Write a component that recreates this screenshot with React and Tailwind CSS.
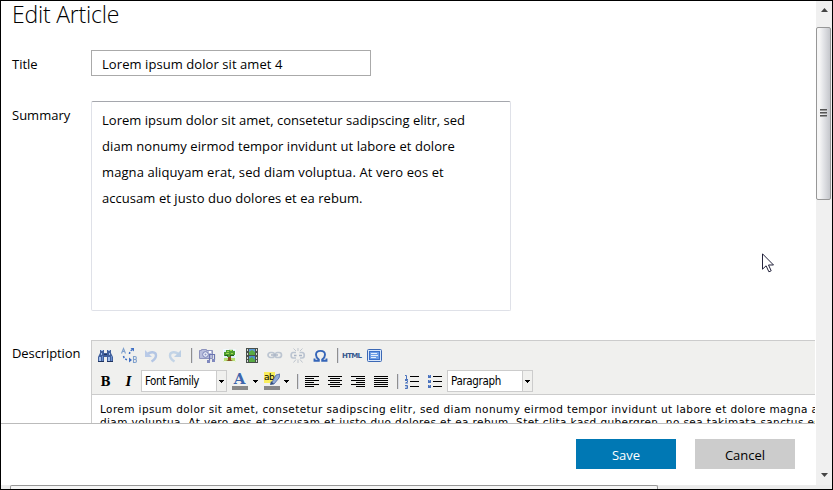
import React from "react";

const UI = "font-['Open_Sans','Noto_Sans',sans-serif]";

function Icon({ children }) {
  return (
    <svg width="23" height="22" viewBox="0 0 23 22" className="block shrink-0" fill="none">
      {children}
    </svg>
  );
}

function Separator({ className = "" }) {
  return (
    <div className={`flex h-[22px] shrink-0 items-center ${className}`}>
      <div className="h-[15px] w-px bg-[#8f8f8f]" />
      <div className="h-[15px] w-px bg-[#d9dce4]" />
    </div>
  );
}

function Binoculars() {
  return (
    <Icon>
      <path d="M6 6h4v3h3V6h4v3l2 4v5h-6v-5h-3v5H4v-5l2-4z" fill="#41609c" />
      <path d="M7 6h2v1H7zM14 6h2v1h-2zM7 9h1v2H7zM15 9h1v2h-1zM5 13h2v4H5zM14 13h2v4h-2z" fill="#a3c0ee" />
      <path d="M8 12h1v5H8zM17 12h1v5h-1z" fill="#6c8fce" />
      <path d="M4 17h6v1H4zM13 17h6v1h-6zM10 10h3v1h-3z" fill="#1f335f" />
    </Icon>
  );
}

function Replace() {
  return (
    <Icon>
      <path d="M4.5 9.500 6.500 4.500 8.500 9.500M5.500 7.500h2" stroke="#7fa0cd" strokeWidth="1.100" />
      <path d="M16.500 12.500v6h1.500c2 0 2-3 0-3 1.800 0 1.800-3 0-3zM16.500 15.500h2" stroke="#7fa0cd" strokeWidth="1.100" />
      <path d="M12.500 10c0-2 1-3.500 3-4.500M6.500 12c.5 2.500 2 3.700 5 4" stroke="#3f6fc4" strokeWidth="1.500" strokeDasharray="2 1.500" />
      <path d="M13.500 4H17v3.500zM12 13.500l3 2.500-3 2.500z" fill="#3f6fc4" />
    </Icon>
  );
}

function Undo() {
  return (
    <Icon>
      <path d="M7 11c3-4 9-3.500 9 .5 0 3-2 4.500-4.500 6" stroke="#b4c6e4" strokeWidth="2.400" />
      <path d="M5 6v7h7z" fill="#b9cae7" />
    </Icon>
  );
}

function Redo() {
  return (
    <Icon>
      <path d="M16 11c-3-4-9-3.500-9 .5 0 3 2 4.500 4.500 6" stroke="#c3d4e6" strokeWidth="2.400" />
      <path d="M18 6v7h-7z" fill="#bccfe4" />
    </Icon>
  );
}

function Media() {
  return (
    <Icon>
      <path d="M4.500 6.500h2v-1h5v1h6v8h-13z" fill="#b9bedd" stroke="#8d93bd" />
      <circle cx="10.500" cy="10.500" r="2.800" fill="#edf0fa" stroke="#7781b5" />
      <circle cx="10.500" cy="10.500" r="1" fill="#8d95c4" />
      <path d="M14 7h2v2h-2z" fill="#fff" />
      <path d="M14.500 17v-6.500h5V16" stroke="#6b75b0" strokeWidth="1.200" />
      <path d="M12 16h3v3h-3zM17 15h3v3h-3z" fill="#8089be" />
    </Icon>
  );
}

function Tree() {
  return (
    <Icon>
      <path d="M5 5h13v13H5z" fill="#dceefa" />
      <path d="M5 14h13v4H5z" fill="#b7dd72" />
      <path d="M10 11h3v5l2 1H8l2-1z" fill="#87501f" />
      <path d="M8 6h3V5h4v2h2v4h-2v1h-3v1H9v-1H6V8h2z" fill="#4d9c30" />
      <path d="M9 7h2v1H9zM12 6h2v1h-2zM8 9h3v1H8zM13 9h2v1h-2z" fill="#a0d94f" />
      <path d="M7 11h3v1H7zM12 11h4v1h-4z" fill="#215d19" />
      <path d="M5.500 5.500h12v12h-12z" stroke="#f8fcff" strokeOpacity=".8" />
    </Icon>
  );
}

function Film() {
  return (
    <Icon>
      <path d="M5 4h12v15H5z" fill="#48504b" />
      <path d="M8 5h6v6H8z" fill="#5b9bd5" />
      <path d="M8 12h6v6H8z" fill="#4b8fcf" />
      <path d="M8 8l3-2 3 2v3H8zM8 15l3-2 3 3v2H8z" fill="#58ab43" />
      <path d="M6 5h1v2H6zM6 9h1v2H6zM6 13h1v2H6zM6 16h1v2H6zM15 5h1v2h-1zM15 9h1v2h-1zM15 13h1v2h-1zM15 16h1v2h-1z" fill="#d6dcd8" />
    </Icon>
  );
}

function Link() {
  return (
    <Icon>
      <rect x="4" y="8.500" width="6.500" height="5" rx="2.500" stroke="#bcc5d1" strokeWidth="1.700" />
      <rect x="11" y="8.500" width="6.500" height="5" rx="2.500" stroke="#bcc5d1" strokeWidth="1.700" />
      <path d="M7 11h7" stroke="#a9b4c5" strokeWidth="1.400" />
    </Icon>
  );
}

function Unlink() {
  return (
    <Icon>
      <path d="M9 8.500H6c-2.500 0-2.500 5.500 0 5.500h3M12.500 8.500H15c3 0 3 5.500 0 5.500h-2" stroke="#bcc5d1" strokeWidth="1.700" />
      <path d="M7 11.500h2.500M12 11.500h3" stroke="#a9b4c5" strokeWidth="1.400" />
      <path d="M9 7 6.500 4.500M11 7V4M13 7l2.500-2.500M9 15.500l-2.500 3M11 15.500V19M13 15.500l2.500 3" stroke="#bfc5cd" />
    </Icon>
  );
}

function Omega() {
  return (
    <Icon>
      <path d="M4.500 14.500v2.300h4.300v-1.300c-2-1.500-2.800-3-2.800-4.800C6 8.300 8 6.900 10.500 6.900S15 8.300 15 10.700c0 1.800-.8 3.300-2.800 4.800v1.300h4.300v-2.300" stroke="#3565b8" strokeWidth="1.900" />
    </Icon>
  );
}

function Fullscreen() {
  return (
    <Icon>
      <rect x="3.500" y="5.500" width="14" height="12" rx="1" fill="#d8e7fb" stroke="#3c68b4" />
      <rect x="5.500" y="7.500" width="10" height="8" fill="#6f9fe6" stroke="#3b70c9" />
      <path d="M7 9h6v1H7zM7 11h7v1H7zM7 13h5v1H7z" fill="#e5effd" />
    </Icon>
  );
}

function Align({ d }) {
  return (
    <Icon>
      <path d={d} stroke="#000" strokeWidth="1" />
    </Icon>
  );
}

const ALIGN_ICONS = [
  "M4 6.500h14M4 8.500h9M4 10.500h14M4 12.500h9M4 14.500h14M4 16.500h9",
  "M4 6.500h14M6 8.500h10M4 10.500h14M6 12.500h10M4 14.500h14M6 16.500h10",
  "M4 6.500h14M9 8.500h9M4 10.500h14M9 12.500h9M4 14.500h14M9 16.500h9",
  "M4 6.500h14M4 8.500h14M4 10.500h14M4 12.500h14M4 14.500h14M4 16.500h14",
];

function NumberedList() {
  return (
    <Icon>
      <path d="M9 6.500h9M9 11.500h9M9 16.500h9" stroke="#000" />
      <path d="M4 5.500h1.500V9M4 9.500h3M4 10.500h2.500v1.500L4.500 13H7M4 15.500h2.500v3H4M4.500 17h2" stroke="#4b73bd" />
    </Icon>
  );
}

function BulletList() {
  return (
    <Icon>
      <path d="M9 6.500h9M9 11.500h9M9 16.500h9" stroke="#000" />
      <path d="M4 5h3v3H4zM4 10h3v3H4zM4 15h3v3H4z" fill="#4b73bd" />
      <path d="M5 5h1v1H5zM5 10h1v1H5zM5 15h1v1H5z" fill="#8facdf" />
    </Icon>
  );
}

function DownArrow() {
  return (
    <svg width="5" height="3" viewBox="0 0 5 3" className="block" shapeRendering="crispEdges">
      <path d="M0 0h5v1H0zM1 1h3v1H1zM2 2h1v1H2z" fill="#000" />
    </svg>
  );
}

function Select({ label, spacing }) {
  return (
    <div className="flex h-[22px] w-[86px] shrink-0 border border-[#ccc] bg-white">
      <div className={`w-[75px] pl-[3px] font-['DejaVu_Sans_Condensed','DejaVu_Sans',sans-serif] text-[11.5px] leading-[20px] whitespace-nowrap text-black ${spacing}`}>
        {label}
      </div>
      <div className="flex w-[10px] items-center justify-center border-l border-[#ccc] bg-[#f0f0ee]">
        <DownArrow />
      </div>
    </div>
  );
}

function Toolbar() {
  return (
    <div className="h-[54px] border-b border-[#ccc] bg-[#f0f0ee] pt-[3px] pl-[2px]">
      <div className="flex h-[22px]">
        <Binoculars />
        <Replace />
        <Undo />
        <Redo />
        <Separator className="w-[9px] pl-[5px]" />
        <Media />
        <Tree />
        <Film />
        <Link />
        <Unlink />
        <Omega />
        <Separator className="w-[9px] pl-[4px]" />
        <div className="w-[22px] font-['DejaVu_Sans',sans-serif] text-[7px] leading-[24px] font-bold tracking-[-0.7px] text-[#36598f]">
          HTML
        </div>
        <Fullscreen />
      </div>
      <div className="mt-[4px] flex h-[22px]">
        <div className="w-[23px] text-center font-['DejaVu_Serif',serif] text-[12px] leading-[24px] font-black text-black">B</div>
        <div className="w-[24px] pr-px text-center font-['DejaVu_Serif',serif] text-[12px] leading-[24px] font-black text-black italic">I</div>
        <Select label="Font Family" spacing="tracking-[-0.45px]" />
        <div className="flex w-[24px] flex-col items-center pt-[2px] pl-px">
          <div className="h-[14px] font-['DejaVu_Serif',serif] text-[15px] leading-[14px] font-bold text-[#3e66ad]">A</div>
          <div className="h-[4px] w-[16px] bg-[#888]" />
        </div>
        <div className="flex w-[9px] items-center justify-center">
          <DownArrow />
        </div>
        <div className="flex w-[24px] flex-col items-center pt-[2px]">
          <div className="relative h-[14px] w-[16px]">
            <div className="h-[11px] w-[11px] bg-[#f9ee5e] font-['DejaVu_Sans',sans-serif] text-[9px] leading-[10px] tracking-[-0.6px] text-black">ab</div>
            <svg width="16" height="14" viewBox="0 0 16 14" className="absolute top-0 left-0">
              <path d="M7 12l5-9 4-1-1 4-5 6z" fill="#93add8" stroke="#4a64a3" strokeWidth=".8" />
              <path d="M6 13l1-4 3 3z" fill="#35507f" />
            </svg>
          </div>
          <div className="h-[4px] w-[16px] bg-[#888]" />
        </div>
        <div className="flex w-[8px] items-center">
          <DownArrow />
        </div>
        <Separator className="w-[9px] pl-[5px]" />
        {ALIGN_ICONS.map((d) => (
          <Align key={d} d={d} />
        ))}
        <Separator className="w-[8px] pl-[4px]" />
        <NumberedList />
        <BulletList />
        <Select label="Paragraph" spacing="tracking-[-0.33px]" />
      </div>
    </div>
  );
}

function VerticalScrollbar() {
  return (
    <div className="flex w-[16px] shrink-0 flex-col items-center bg-[#f0f0f0]">
      <svg width="7" height="4" viewBox="0 0 7 4" className="mt-[7px] shrink-0">
        <path d="M3.500 0L7 4H0z" fill="#444" />
      </svg>
      <div className="mt-[15px] flex h-[173px] w-[15px] shrink-0 flex-col items-center justify-center gap-[1px] self-start rounded-[2px] border border-[#979797] bg-linear-to-r from-[#f6f6f6] from-20% via-[#e6e7ea] via-45% to-[#c5c7cc] pb-px">
        <div className="h-[2px] w-[7px] border-b border-[#999] bg-[#555]" />
        <div className="h-[2px] w-[7px] border-b border-[#999] bg-[#555]" />
        <div className="h-[2px] w-[7px] border-b border-[#999] bg-[#555]" />
      </div>
      <svg width="7" height="4" viewBox="0 0 7 4" className="mt-auto mb-[8px] shrink-0">
        <path d="M3.500 4L0 0h7z" fill="#444" />
      </svg>
    </div>
  );
}

export default function App() {
  return (
    <div className={`relative flex h-[490px] w-[833px] flex-col overflow-hidden border border-black bg-white text-[13px] text-black ${UI}`}>
      <div className="flex h-[484px]">
        <div className="mr-px flex w-[814px] flex-col">
          <div className="h-[422px] overflow-hidden pl-[11px]">
            <h1 className="h-[49px] text-[23px] leading-[27px] font-light tracking-[-0.2px]">Edit Article</h1>
            <div className="flex">
              <div className="w-[79px] leading-[28px]">Title</div>
              <div className="h-[26px] w-[280px] border border-[#aaa] pl-[10px] leading-[26px] tracking-[0.07px]">Lorem ipsum dolor sit amet 4</div>
            </div>
            <div className="mt-[23px] flex">
              <div className="w-[79px] leading-[28px]">Summary</div>
              <div className="h-[210px] w-[420px] rounded-[2px] border border-[#dfe1e8] border-t-[#a5a7ad] pt-[5px] pl-[10px] leading-[26px] whitespace-nowrap">
                <div className="tracking-[0.02px]">Lorem ipsum dolor sit amet, consetetur sadipscing elitr, sed</div>
                <div className="tracking-[0.07px]">diam nonumy eirmod tempor invidunt ut labore et dolore</div>
                <div className="tracking-[0.09px]">magna aliquyam erat, sed diam voluptua. At vero eos et</div>
                <div className="tracking-[0.05px]">accusam et justo duo dolores et ea rebum.</div>
              </div>
            </div>
            <div className="mt-[29px] flex">
              <div className="w-[79px] shrink-0 leading-[26px] tracking-[-0.1px]">Description</div>
              <div className="w-[762px] shrink-0 border border-[#ccc]">
                <Toolbar />
                <div className="pt-[8px] pl-[8px] font-['DejaVu_Sans',sans-serif] text-[10.5px] leading-[13px] tracking-[0.395px] whitespace-nowrap">
                  <div>Lorem ipsum dolor sit amet, consetetur sadipscing elitr, sed diam nonumy eirmod tempor invidunt ut labore et dolore magna al</div>
                  <div>diam voluptua. At vero eos et accusam et justo duo dolores et ea rebum. Stet clita kasd gubergren, no sea takimata sanctus est</div>
                </div>
              </div>
            </div>
          </div>
          <div className="flex h-[62px] justify-end gap-[19px] border-t border-[#bbb] bg-white pt-[15px] pr-[20px] text-center leading-[32px]">
            <div className="h-[30px] w-[100px] bg-[#0078b4] text-white">Save</div>
            <div className="h-[30px] w-[100px] bg-[#ccc]">Cancel</div>
          </div>
        </div>
        <VerticalScrollbar />
      </div>
      <div className="flex h-[4px] bg-[#ececec] pl-[9px]">
        <div className="h-[4px] w-[648px] rounded-t-[2px] border border-b-0 border-[#979797] bg-[#f5f5f5]" />
      </div>
      <svg width="13" height="20" viewBox="0 0 13 20" className="absolute top-[252px] left-[761px]">
        <path d="M.5.8v15.400l3.600-3.400 2.800 6 2.300-1-2.700-5.800h5z" fill="#fff" stroke="#23233c" />
      </svg>
    </div>
  );
}
